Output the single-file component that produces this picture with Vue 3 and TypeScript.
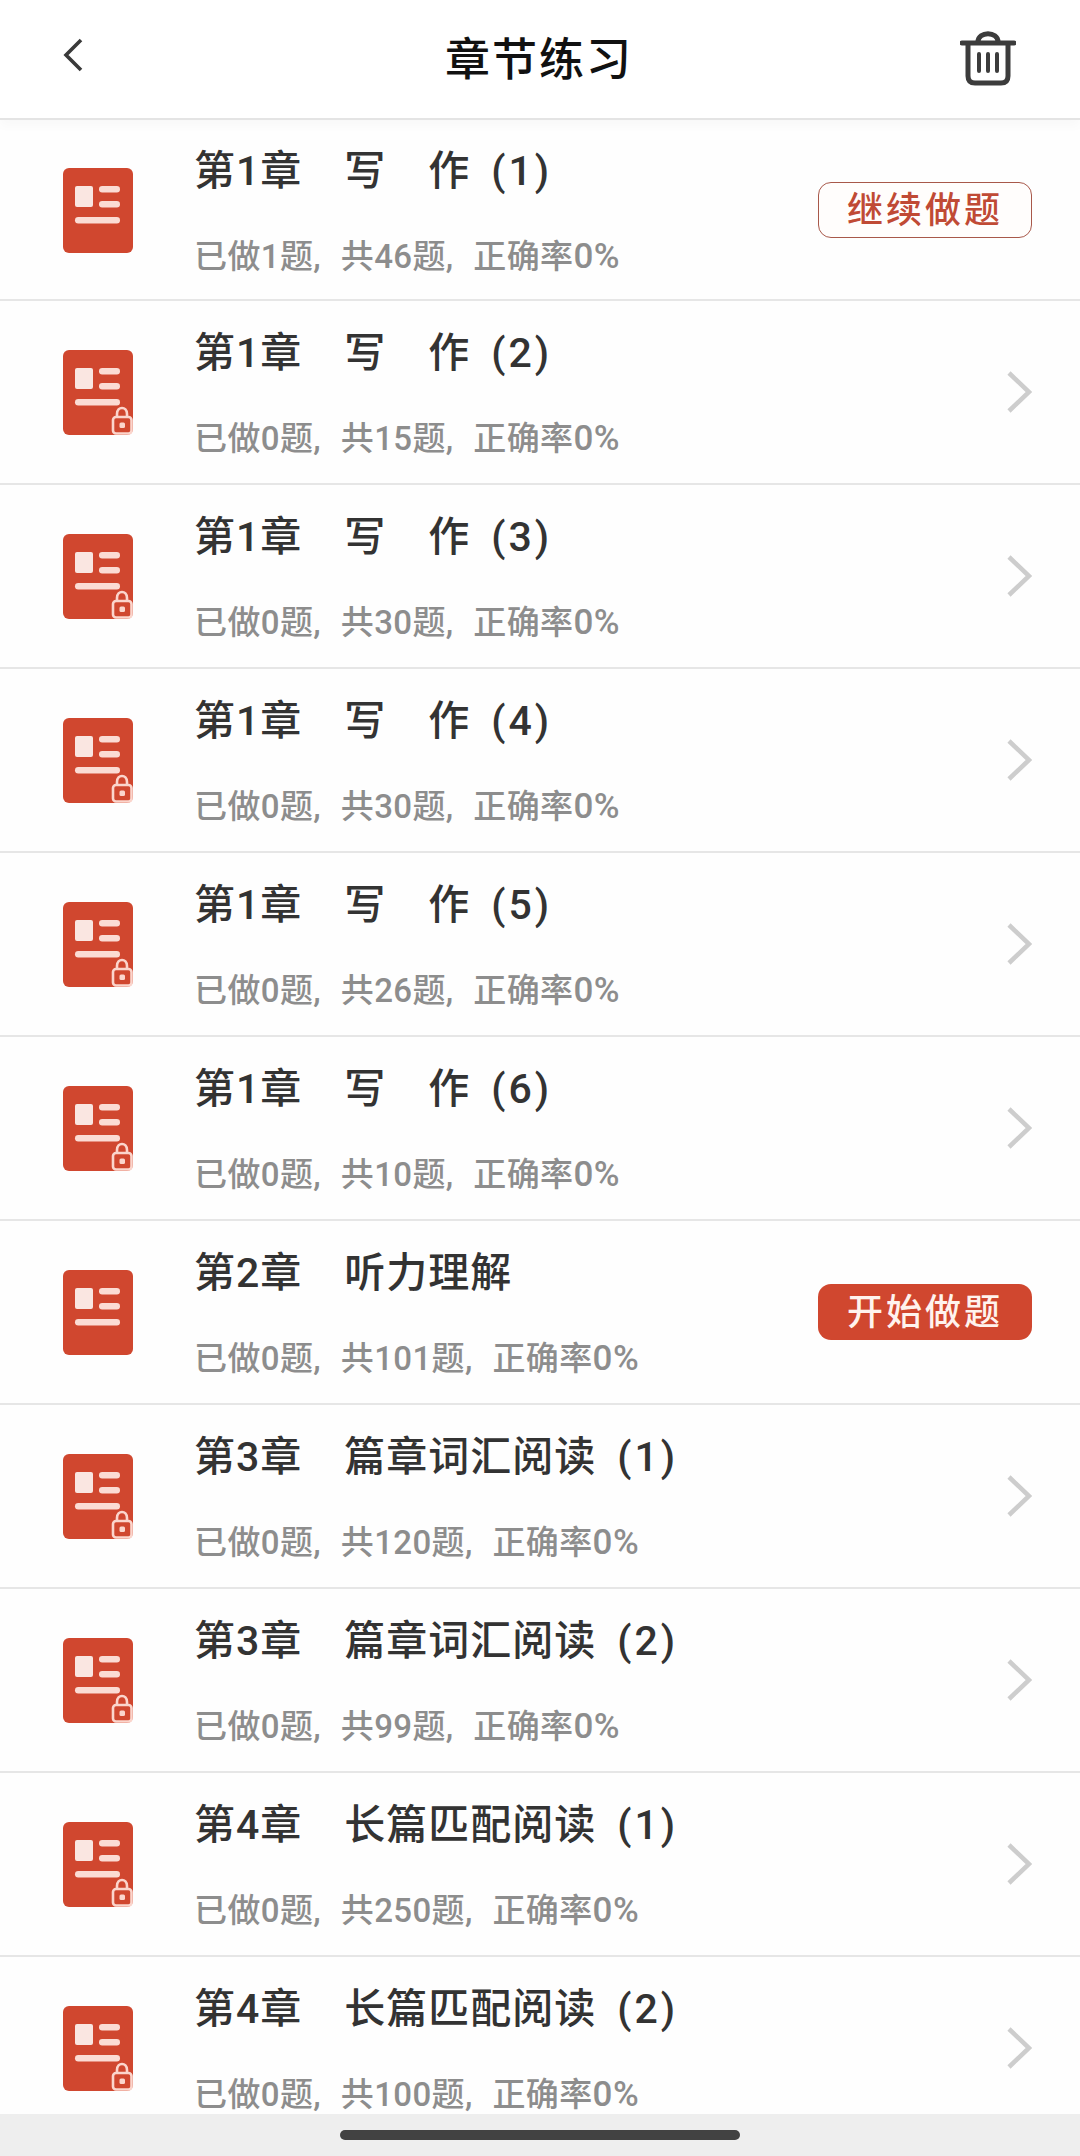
<script setup lang="ts">
interface Chapter {
  title: string
  part?: string
  done: number
  total: number
  action?: 'continue' | 'start'
}

const chapters: Chapter[] = [
  { title: '第1章　写　作', part: '(1)', done: 1, total: 46, action: 'continue' },
  { title: '第1章　写　作', part: '(2)', done: 0, total: 15 },
  { title: '第1章　写　作', part: '(3)', done: 0, total: 30 },
  { title: '第1章　写　作', part: '(4)', done: 0, total: 30 },
  { title: '第1章　写　作', part: '(5)', done: 0, total: 26 },
  { title: '第1章　写　作', part: '(6)', done: 0, total: 10 },
  { title: '第2章　听力理解', done: 0, total: 101, action: 'start' },
  { title: '第3章　篇章词汇阅读', part: '(1)', done: 0, total: 120 },
  { title: '第3章　篇章词汇阅读', part: '(2)', done: 0, total: 99 },
  { title: '第4章　长篇匹配阅读', part: '(1)', done: 0, total: 250 },
  { title: '第4章　长篇匹配阅读', part: '(2)', done: 0, total: 100 },
]
</script>

<template>
  <div class="page">
    <header class="header">
      <svg class="back" viewBox="0 0 22 34" width="22" height="34">
        <path d="M19 2 L4 17 L19 32" fill="none" stroke="#3a3a3a" stroke-width="3.6" />
      </svg>
      <h1 class="title">章节练习</h1>
      <svg class="trash" viewBox="0 0 56 56" width="56" height="56">
        <path d="M2 13 H54" stroke="#3c3c3c" stroke-width="5" stroke-linecap="round" fill="none" />
        <path d="M18 12 C18 1 38 1 38 12" stroke="#3c3c3c" stroke-width="5" fill="none" />
        <path d="M8 14 V46 Q8 53 15 53 H41 Q48 53 48 46 V14" stroke="#3c3c3c" stroke-width="5" fill="none" />
        <path d="M19 24 V41 M28 24 V41 M37 24 V41" stroke="#3c3c3c" stroke-width="4" stroke-linecap="round" fill="none" />
      </svg>
    </header>

    <main class="list">
      <div v-for="item in chapters" :key="item.title + item.part" class="row">
        <svg class="doc" viewBox="0 0 72 86" width="72" height="86">
          <rect x="1" y="0" width="70" height="85" rx="6" fill="#d0472f" />
          <rect x="13" y="18" width="18" height="21" rx="2" fill="#fae6e1" />
          <rect x="37" y="18" width="21" height="6.5" rx="3.2" fill="#fbdcd4" />
          <rect x="37" y="33" width="21" height="6.5" rx="3.2" fill="#fbdcd4" />
          <rect x="13" y="49" width="45" height="6.5" rx="3.2" fill="#fbdcd4" />
          <g v-if="!item.action">
            <path d="M55 68 V64 C55 56 65 56 65 64 V68" fill="none" stroke="#fbd5cc" stroke-width="2.6" />
            <rect x="51" y="67" width="18.5" height="16.5" rx="3" fill="#d0472f" stroke="#fbd5cc" stroke-width="2.6" />
            <rect x="57.5" y="72.5" width="5.5" height="5.5" rx="1.5" fill="#fbd5cc" />
          </g>
        </svg>
        <div class="text">
          <div class="name">{{ item.title }}<span v-if="item.part" class="part">{{ item.part }}</span></div>
          <div class="stats">已做{{ item.done }}题, 共{{ item.total }}题, 正确率<span class="rate">0%</span></div>
        </div>
        <button v-if="item.action === 'continue'" class="btn outline">继续做题</button>
        <button v-else-if="item.action === 'start'" class="btn solid">开始做题</button>
        <svg v-else class="chevron" viewBox="0 0 26 42" width="26" height="42">
          <path d="M3 2 L23 21 L3 40" fill="none" stroke="#cdcdcd" stroke-width="4.6" />
        </svg>
      </div>
    </main>

    <footer class="home-bar">
      <span class="indicator"></span>
    </footer>
  </div>
</template>

<style>
html,
body {
  margin: 0;
  background: #fff;
}
</style>

<style scoped>
.page {
  width: 1080px;
  height: 2156px;
  display: flex;
  flex-direction: column;
  overflow: hidden;
  background: #fefefe;
  font-family: Roboto, "Noto Sans CJK SC", sans-serif;
}

.header {
  position: relative;
  z-index: 1;
  flex: none;
  height: 114px;
  display: grid;
  grid-template-columns: 1fr auto 1fr;
  align-items: center;
  padding: 0 64px 4px 62px;
  background: #fff;
  border-bottom: 2px solid #e4e4e4;
  box-shadow: 0 6px 10px rgba(0, 0, 0, 0.025);
}

.back {
  margin-bottom: 4px;
}

.title {
  margin: 6px 0 0;
  font-size: 45px;
  font-weight: 500;
  letter-spacing: 2px;
  color: #111;
  line-height: 1;
}

.trash {
  justify-self: end;
  margin-top: 2px;
}

.list {
  flex: 1;
  min-height: 0;
  overflow: hidden;
}

.row {
  height: 184px;
  box-sizing: border-box;
  display: flex;
  align-items: center;
  padding-left: 62px;
  padding-right: 48px;
  border-bottom: 2px solid #e6e6e6;
}

.row:first-child {
  height: 181px;
}

.doc {
  flex: none;
  margin-top: 2px;
}

.text {
  flex: 1;
  margin-left: 60px;
  display: flex;
  flex-direction: column;
  gap: 40px;
  margin-top: 4px;
}

.name {
  font-size: 41px;
  line-height: 50px;
  font-weight: 500;
  letter-spacing: 1px;
  color: #333;
  white-space: pre;
}

.part {
  margin-left: 21px;
  letter-spacing: 3px;
}

.stats {
  font-size: 33px;
  line-height: 42px;
  font-weight: 500;
  letter-spacing: 0.4px;
  word-spacing: 11px;
  color: #8d8d8d;
}

.rate {
  font-size: 35px;
  letter-spacing: 0.5px;
}

.btn {
  width: 214px;
  height: 56px;
  box-sizing: border-box;
  padding: 2px 0 0;
  border-radius: 13px;
  font-family: inherit;
  font-size: 36px;
  font-weight: 500;
  letter-spacing: 3px;
  line-height: 1;
}

.outline {
  background: #fffdfc;
  border: 1.5px solid #a8584a;
  color: #c04a35;
}

.solid {
  background: #d0472f;
  border: none;
  color: #fff3ee;
}

.chevron {
  flex: none;
}

.home-bar {
  flex: none;
  height: 42px;
  background: #eeeeee;
  display: flex;
  justify-content: center;
  padding-top: 16px;
  box-sizing: border-box;
}

.indicator {
  width: 400px;
  height: 10px;
  border-radius: 5px;
  background: #424242;
}
</style>
